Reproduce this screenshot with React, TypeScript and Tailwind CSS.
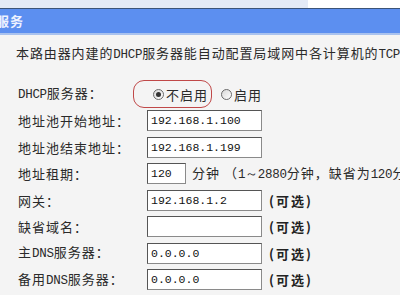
import React from "react";

const cjk = { fontFamily: '"Noto Sans CJK SC", "Noto Sans", sans-serif' };
const mono = { fontFamily: '"Liberation Mono", "DejaVu Sans Mono", monospace' };

function M({ children }: { children: React.ReactNode }) {
  return (
    <span className="text-[12.5px] tracking-[-0.3px]" style={mono}>
      {children}
    </span>
  );
}

function Input({ value, w = "w-[115px]" }: { value: string; w?: string }) {
  return (
    <div
      className={`${w} h-[21px] bg-white border border-[#8a8a8a] border-t-[#555] border-l-[#555] flex items-center pl-[3px] text-[11.5px] tracking-normal text-[#111] shrink-0`}
      style={mono}
    >
      {value}
    </div>
  );
}

function Row({ label, children }: { label: React.ReactNode; children?: React.ReactNode }) {
  return (
    <div className="flex items-center h-[26.5px]">
      <div className="w-[147px] pl-[18px] shrink-0 whitespace-nowrap">{label}</div>
      {children}
    </div>
  );
}

function Opt() {
  return (
    <span className="ml-[7px] font-bold text-[#222] whitespace-nowrap tracking-[2px]">
      (可选)
    </span>
  );
}

function Radio({ checked }: { checked?: boolean }) {
  return (
    <span className="w-[11px] h-[11px] rounded-full border border-[#6a6a6a] bg-gradient-to-br from-[#d8d8d8] to-white flex items-center justify-center shrink-0">
      {checked && <span className="w-[5px] h-[5px] rounded-full bg-[#333]" />}
    </span>
  );
}

export default function App() {
  return (
    <div
      className="w-[400px] h-[300px] overflow-hidden flex flex-col bg-[#f4f4f4] text-[13px] tracking-[1px] text-[#2a2a2a]"
      style={cjk}
    >
      <div className="h-[8px] flex shrink-0">
        <div className="w-[308px] bg-[#e4eaf6]" />
        <div className="flex-1 bg-white" />
      </div>
      <div className="h-[1px] bg-[#3c5478] shrink-0" />
      <div className="h-[24px] bg-[#5c8ff0] flex items-center shrink-0 text-[#eef2ff] text-[13px] font-semibold -ml-[4px]">
        服务
      </div>
      <div className="h-[2px] bg-[#a9c2ee] shrink-0" />
      <div className="flex-1 flex flex-col min-h-0">
        <div className="pl-[16px] pt-[8px] h-[28px] leading-[20px] whitespace-nowrap tracking-[0.9px]">
          本路由器内建的<M>DHCP</M>服务器能自动配置局域网中各计算机的<M>TCP/IP</M>协议。
        </div>
        <div className="mt-[18px] flex flex-col">
          <Row
            label={
              <>
                <M>DHCP</M>服务器：
              </>
            }
          >
            <div className="relative flex items-center h-[26.5px]">
              <div className="absolute left-[-14px] top-[-1px] w-[79px] h-[28px] rounded-[11px] border border-[#c04848]" />
              <span className="ml-[6px]">
                <Radio checked />
              </span>
              <span className="ml-[2px]">不启用</span>
              <span className="ml-[13px]">
                <Radio />
              </span>
              <span className="ml-[2px]">启用</span>
            </div>
          </Row>
          <Row label="地址池开始地址：">
            <Input value="192.168.1.100" />
          </Row>
          <Row label="地址池结束地址：">
            <Input value="192.168.1.199" />
          </Row>
          <Row label="地址租期：">
            <Input value="120" w="w-[39px]" />
            <span className="ml-[6px] whitespace-nowrap">
              分钟 （<M>1～2880</M>分钟，缺省为<M>120</M>分钟）
            </span>
          </Row>
          <Row label="网关：">
            <Input value="192.168.1.2" />
            <Opt />
          </Row>
          <Row label="缺省域名：">
            <Input value="" />
            <Opt />
          </Row>
          <Row
            label={
              <>
                主<M>DNS</M>服务器：
              </>
            }
          >
            <Input value="0.0.0.0" />
            <Opt />
          </Row>
          <Row
            label={
              <>
                备用<M>DNS</M>服务器：
              </>
            }
          >
            <Input value="0.0.0.0" />
            <Opt />
          </Row>
        </div>
      </div>
      <div className="h-[5px] bg-white shrink-0" />
    </div>
  );
}
